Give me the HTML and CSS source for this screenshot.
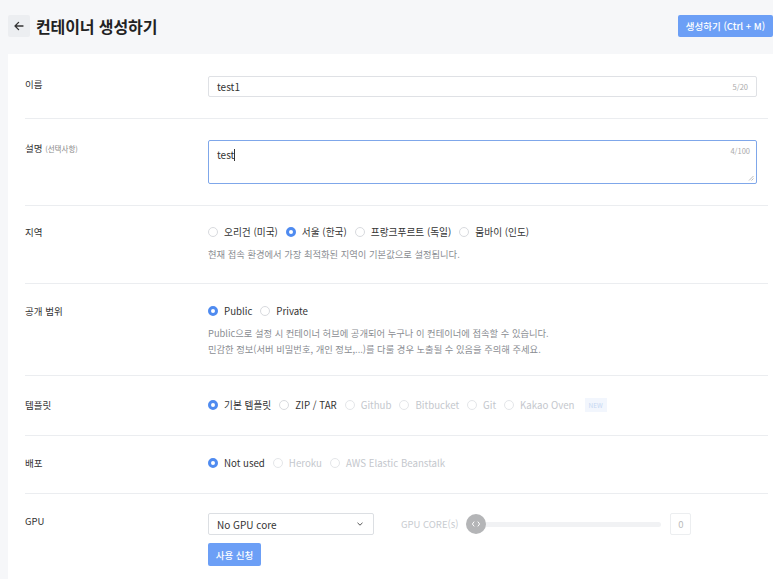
FILE: index.html
```html
<!DOCTYPE html>
<html lang="ko">
<head>
<meta charset="utf-8">
<title>컨테이너 생성하기</title>
<link rel="stylesheet" href="styles.css">
</head>
<body>
<div class="page">
  <header class="header">
    <button class="back" aria-label="뒤로">
      <svg width="12" height="12" viewBox="0 0 12 12"><path d="M10 6H2.2M5.6 2.4L2 6l3.6 3.6" fill="none" stroke="#333" stroke-width="1.3" stroke-linecap="round" stroke-linejoin="round"/></svg>
    </button>
    <h1 class="title">컨테이너 생성하기</h1>
    <button class="primary create">생성하기 (Ctrl + M)</button>
  </header>

  <main class="card">
    <section class="row row-name">
      <div class="label">이름</div>
      <div class="control">
        <div class="input">
          <span class="value">test1</span>
          <span class="count">5/20</span>
        </div>
      </div>
    </section>

    <section class="row row-desc">
      <div class="label">설명 <span class="opt">(선택사항)</span></div>
      <div class="control">
        <div class="textarea">
          <span class="value">test<span class="caret"></span></span>
          <span class="count count-top">4/100</span>
          <svg class="grip" width="6" height="6" viewBox="0 0 6 6"><path d="M5.5 1L1 5.5M5.5 3.5L3.5 5.5" stroke="#aaa" stroke-width="0.8"/></svg>
        </div>
      </div>
    </section>

    <section class="row row-radio row-region">
      <div class="label">지역</div>
      <div class="control">
        <div class="radios">
          <span class="radio"><i class="dot"></i>오리건 (미국)</span>
          <span class="radio on"><i class="dot"></i>서울 (한국)</span>
          <span class="radio"><i class="dot"></i>프랑크푸르트 (독일)</span>
          <span class="radio"><i class="dot"></i>뭄바이 (인도)</span>
        </div>
        <p class="help">현재 접속 환경에서 가장 최적화된 지역이 기본값으로 설정됩니다.</p>
      </div>
    </section>

    <section class="row row-radio row-visibility">
      <div class="label">공개 범위</div>
      <div class="control">
        <div class="radios">
          <span class="radio on"><i class="dot"></i>Public</span>
          <span class="radio"><i class="dot"></i>Private</span>
        </div>
        <p class="help">Public으로 설정 시 컨테이너 허브에 공개되어 누구나 이 컨테이너에 접속할 수 있습니다.<br>민감한 정보(서버 비밀번호, 개인 정보,...)를 다룰 경우 노출될 수 있음을 주의해 주세요.</p>
      </div>
    </section>

    <section class="row row-template">
      <div class="label">템플릿</div>
      <div class="control">
        <div class="radios">
          <span class="radio on"><i class="dot"></i>기본 템플릿</span>
          <span class="radio"><i class="dot"></i>ZIP / TAR</span>
          <span class="radio off"><i class="dot"></i>Github</span>
          <span class="radio off"><i class="dot"></i>Bitbucket</span>
          <span class="radio off"><i class="dot"></i>Git</span>
          <span class="radio off"><i class="dot"></i>Kakao Oven<em class="new">NEW</em></span>
        </div>
      </div>
    </section>

    <section class="row row-deploy">
      <div class="label">배포</div>
      <div class="control">
        <div class="radios">
          <span class="radio on"><i class="dot"></i>Not used</span>
          <span class="radio off"><i class="dot"></i>Heroku</span>
          <span class="radio off"><i class="dot"></i>AWS Elastic Beanstalk</span>
        </div>
      </div>
    </section>

    <section class="row row-gpu">
      <div class="label">GPU</div>
      <div class="control">
        <div class="gpu-line">
          <div class="select">
            <span>No GPU core</span>
            <svg width="8" height="6" viewBox="0 0 8 6"><path d="M1.5 1.8L4 4.2l2.5-2.4" fill="none" stroke="#555" stroke-width="1"/></svg>
          </div>
          <div class="slider">
            <span class="slider-label">GPU CORE(s)</span>
            <div class="track">
              <span class="thumb"><svg width="10" height="8" viewBox="0 0 10 8"><path d="M3.2 1.6L1.4 4l1.8 2.4M6.8 1.6L8.6 4 6.8 6.4" fill="none" stroke="#fff" stroke-width="1"/></svg></span>
            </div>
            <span class="num">0</span>
          </div>
        </div>
        <button class="primary apply">사용 신청</button>
      </div>
    </section>
  </main>
</div>
</body>
</html>
```

FILE: styles.css
```css
* { box-sizing: border-box; }
html, body { margin: 0; padding: 0; }
body {
  background: #f6f7f9;
  font-family: "Noto Sans CJK KR", "Noto Sans", sans-serif;
  color: #333;
  overflow: hidden;
}
.page { padding-left: 8px; }

.header {
  display: flex;
  align-items: center;
  height: 54px;
  padding: 15px 0 17px;
}
.back {
  width: 22px;
  height: 22px;
  border: 0;
  border-radius: 2px;
  background: #eceef1;
  display: flex;
  align-items: center;
  justify-content: center;
  padding: 0;
  margin-right: 6px;
}
.title {
  margin: 0;
  font-size: 16px;
  font-weight: 700;
  color: #222;
  letter-spacing: -0.1px;
  line-height: 22px;
}
.primary {
  border: 0;
  background: #6c9ff6;
  color: #fff;
  font-family: inherit;
  border-radius: 2px;
  padding: 0;
}
.create {
  margin-left: auto;
  width: 95px;
  height: 22px;
  font-size: 9.5px;
  font-weight: 500;
}

.card {
  background: #fff;
  padding: 0 5px 0 17px;
}
.row {
  display: flex;
  align-items: flex-start;
  border-bottom: 1px solid #ebedf0;
  padding: 22px 11px 21px 0;
}
.row:last-child { border-bottom: 0; }
.label {
  width: 183px;
  flex: none;
  font-size: 9.5px;
  line-height: 16px;
  color: #333;
}
.opt { font-size: 7.5px; color: #888; }
.control { flex: 1; min-width: 0; }

.input, .textarea {
  position: relative;
  border: 1px solid #dfe1e5;
  border-radius: 2px;
  background: #fff;
  font-size: 10px;
  color: #333;
}
.input {
  height: 21px;
  display: flex;
  align-items: center;
  padding: 0 8px;
}
.input .value { flex: 1; }
.count { font-size: 7.5px; color: #aaa; }
.row-desc { padding-top: 21px; padding-bottom: 21px; }
.textarea {
  height: 44px;
  border-color: #7fa7ea;
  padding: 6px 8px;
  line-height: 16px;
}
.caret {
  display: inline-block;
  width: 1px;
  height: 12px;
  background: #333;
  vertical-align: -2px;
}
.count-top { position: absolute; top: 4px; right: 6px; line-height: 12px; }
.grip { position: absolute; right: 2px; bottom: 2px; }

.row-radio { padding-top: 18px; padding-bottom: 20px; }
.row-region { padding-bottom: 21px; }
.row-visibility { padding-top: 19px; padding-bottom: 18px; }
.row-template { padding-top: 21px; padding-bottom: 22px; }
.row-deploy { padding-top: 19px; padding-bottom: 22px; }
.radios {
  display: flex;
  align-items: center;
  gap: 8px;
  height: 16px;
  font-size: 9.7px;
}
.radio {
  display: inline-flex;
  align-items: center;
  gap: 6px;
  color: #333;
  white-space: nowrap;
}
.dot {
  width: 10px;
  height: 10px;
  border-radius: 50%;
  border: 1px solid #d8dade;
  background: #fff;
  flex: none;
}
.radio.on .dot {
  border: 3px solid #4f8bf0;
  background: #fff;
}
.radio.off { color: #c4c7cd; }
.radio.off .dot { border-color: #e4e6e9; }
.new {
  font-style: normal;
  font-size: 6.5px;
  color: #c6d6f2;
  background: #f2f6fd;
  padding: 2px 4px;
  margin-left: 4px;
  line-height: 10px;
}
.help {
  margin: 6px 0 0;
  font-size: 9.3px;
  line-height: 16px;
  color: #8a8d92;
}

.row-gpu { padding-top: 19px; padding-bottom: 20px; }
.gpu-line { display: flex; align-items: center; }
.select {
  width: 166px;
  height: 22px;
  border: 1px solid #dcdfe3;
  border-radius: 2px;
  display: flex;
  align-items: center;
  justify-content: space-between;
  padding: 0 9px 0 8px;
  font-size: 10px;
  color: #333;
}
.slider {
  display: flex;
  align-items: center;
  margin-left: 27px;
}
.slider-label { font-size: 9.5px; color: #c8cbd0; margin-right: 8px; }
.track {
  position: relative;
  width: 195px;
  height: 5px;
  background: #f1f2f4;
  border-radius: 3px;
  display: flex;
  align-items: center;
}
.thumb {
  width: 20px;
  height: 20px;
  border-radius: 50%;
  background: #b4b5b7;
  display: flex;
  align-items: center;
  justify-content: center;
}
.num {
  width: 21px;
  height: 22px;
  margin-left: 9px;
  border: 1px solid #eceef0;
  border-radius: 2px;
  font-size: 9.5px;
  color: #bbb;
  display: flex;
  align-items: center;
  justify-content: center;
}
.apply {
  margin-top: 8px;
  width: 53px;
  height: 23px;
  font-size: 9.5px;
  font-weight: 500;
  display: block;
}
```
